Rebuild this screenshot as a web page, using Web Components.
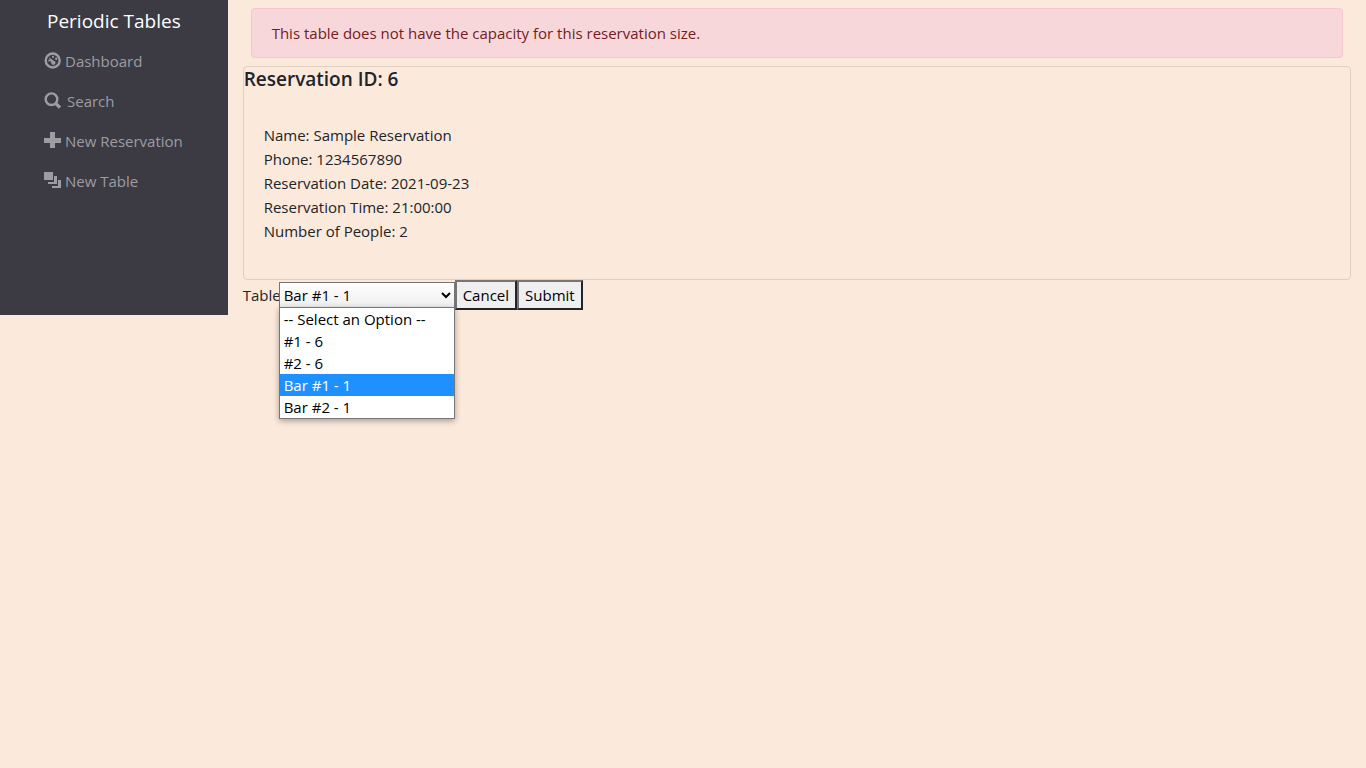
<!DOCTYPE html>
<html lang="en">
<head>
<meta charset="utf-8">
<meta name="viewport" content="width=device-width, initial-scale=1">
<title>Periodic Tables</title>
<style>
body { margin: 0; min-height: 100vh; background: #fbe9db; color: #212529; font: 15px/24px "Open Sans", "Noto Sans", sans-serif; }
</style>
</head>
<body>
<app-shell>
  <side-menu slot="side" brand="Periodic Tables">
    <menu-link icon="dashboard" href="#dashboard">Dashboard</menu-link>
    <menu-link icon="search" href="#search">Search</menu-link>
    <menu-link icon="plus" href="#new-reservation">New Reservation</menu-link>
    <menu-link icon="layers" href="#new-table">New Table</menu-link>
  </side-menu>
  <error-alert>This table does not have the capacity for this reservation size.</error-alert>
  <reservation-card>
    <span slot="title">Reservation ID: 6</span>
    <div>Name: Sample Reservation</div>
    <div>Phone: 1234567890</div>
    <div>Reservation Date: 2021-09-23</div>
    <div>Reservation Time: 21:00:00</div>
    <div>Number of People: 2</div>
  </reservation-card>
  <seat-form></seat-form>
</app-shell>
<script>
const define = (name, html, setup) => {
  const template = document.createElement('template');
  template.innerHTML = html;
  customElements.define(name, class extends HTMLElement {
    constructor() {
      super();
      this.attachShadow({ mode: 'open' }).append(template.content.cloneNode(true));
    }
    connectedCallback() { if (setup) setup(this, this.shadowRoot); }
  });
};

define('app-shell', `
<style>
:host { display: grid; grid-template-columns: 1fr 5fr; align-items: start; min-height: 100vh; }
main { padding: 8px 15px; min-width: 0; }
</style>
<slot name="side"></slot><main><slot></slot></main>`);

define('side-menu', `
<style>
:host { display: block; background: #3c3b44; padding-bottom: 114px; }
a { display: block; padding: 9px 0 8px; text-align: center; font-size: 19px; color: #fff; text-decoration: none; }
nav { display: flex; flex-direction: column; padding-left: 44px; }
</style>
<a href="#home"></a><nav><slot></slot></nav>`,
(host, root) => { root.querySelector('a').textContent = host.getAttribute('brand'); });

const icons = {
  dashboard: '<circle cx="8.7" cy="8.5" r="7" fill="none" stroke="currentColor" stroke-width="2.4"/><circle cx="5.2" cy="8.6" r="1"/><circle cx="9" cy="4.8" r="1.1"/><circle cx="12.2" cy="6.8" r="1.2"/><path d="M4.9 5.2 9.8 8.7A2.1 2.1 0 1 1 7.3 11Z"/>',
  search: '<circle cx="7.5" cy="7.2" r="5.8" fill="none" stroke="currentColor" stroke-width="2.4"/><path d="M11 12 12.2 10.8 16.2 14.4 14.8 15.8Z" stroke="currentColor" stroke-width="1.4"/>',
  plus: '<path d="M6 0h5v6h6v5h-6v5H6v-5H0V6h6Z"/>',
  layers: '<path d="M0 0h9v8H0ZM10 4h3v8H4v-2h6ZM14 8h3v8H8v-2h6Z"/>'
};
define('menu-link', `
<style>
:host { display: block; }
a { display: flex; align-items: center; gap: 4px; padding: 8px 0; color: #9d9da1; text-decoration: none; }
:host([icon=search]) a { gap: 6px; }
svg { width: 17px; height: 17px; margin-bottom: 1px; fill: currentColor; flex: none; }
</style>
<a><svg viewBox="0 0 17 17" aria-hidden="true"></svg><slot></slot></a>`,
(host, root) => {
  root.querySelector('a').href = host.getAttribute('href');
  root.querySelector('svg').innerHTML = icons[host.getAttribute('icon')];
});

define('error-alert', `
<style>
:host { display: block; margin: 0 8px 8px; padding: 12px 20px; border: 1px solid #f5c6cb; border-radius: 4px; background: #f8d7da; color: #721c24; }
</style>
<div role="alert"><slot></slot></div>`);

define('reservation-card', `
<style>
:host { display: block; border: 1px solid #dfcfc2; border-radius: 4px; }
h5 { margin: 0 0 12px; font-size: 19px; line-height: 24px; font-weight: 600; }
div { padding: 20px 20px 36px; }
</style>
<h5><slot name="title"></slot></h5><div><slot></slot></div>`);

define('seat-form', `
<style>
form { display: flex; align-items: center; }
label { width: 36px; white-space: nowrap; }
.field { position: relative; }
select, button { box-sizing: border-box; font: inherit; color: #000; margin: 0; }
select { display: block; width: 176px; height: 26px; padding: 0; border: 1px solid #767676; border-radius: 0; background: linear-gradient(#fff, #efefef); }
button { height: 30px; padding: 0 6px; border: 2px solid; border-color: #767676 #212529 #212529 #767676; background: #efefef; line-height: 24px; }
ul { position: absolute; top: calc(100% - 1px); left: 0; right: 0; margin: 0; padding: 0; list-style: none; background: #fff; color: #000; border: 1px solid #767676; box-shadow: 0 2px 6px #0005; line-height: 22px; }
li { padding: 0 4px; }
li[aria-selected=true] { background: #1e90ff; color: #fff; }
</style>
<form>
  <label for="table">Table</label>
  <div class="field">
    <select id="table" name="table">
      <option>-- Select an Option --</option><option>#1 - 6</option><option>#2 - 6</option><option selected>Bar #1 - 1</option><option>Bar #2 - 1</option>
    </select>
    <ul role="listbox" aria-label="Table">
      <li role="option">-- Select an Option --</li><li role="option">#1 - 6</li><li role="option">#2 - 6</li><li role="option" aria-selected="true">Bar #1 - 1</li><li role="option">Bar #2 - 1</li>
    </ul>
  </div>
  <button type="button">Cancel</button>
  <button type="submit">Submit</button>
</form>`);
</script>
</body>
</html>
